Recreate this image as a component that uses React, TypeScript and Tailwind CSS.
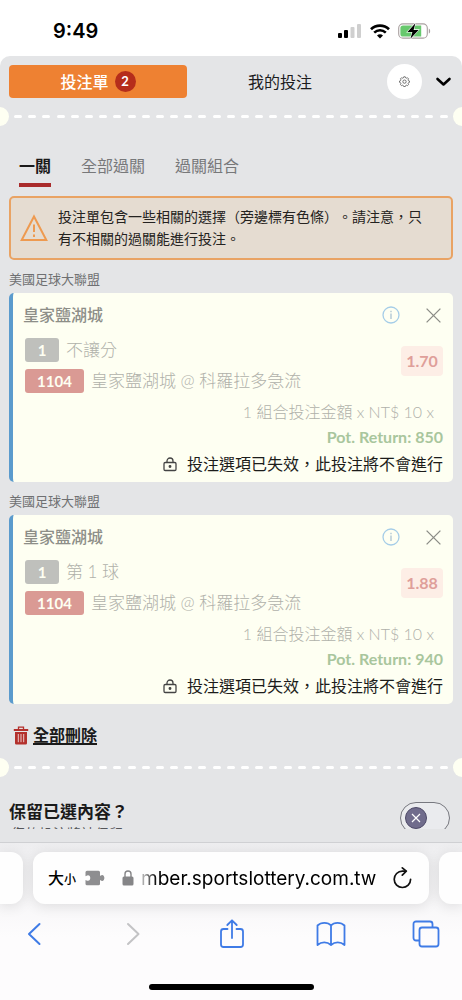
import React from "react";

type Bet = {
  id: string;
  league: string;
  pick: string;
  market: string;
  code: string;
  match: string;
  odds: string;
  payout: string;
};

const bets: Bet[] = [
  {
    id: "bet-1",
    league: "美國足球大聯盟",
    pick: "皇家鹽湖城",
    market: "不讓分",
    code: "1104",
    match: "皇家鹽湖城 @ 科羅拉多急流",
    odds: "1.70",
    payout: "850",
  },
  {
    id: "bet-2",
    league: "美國足球大聯盟",
    pick: "皇家鹽湖城",
    market: "第 1 球",
    code: "1104",
    match: "皇家鹽湖城 @ 科羅拉多急流",
    odds: "1.88",
    payout: "940",
  },
];

function StatusBar() {
  return (
    <header className="flex h-14 shrink-0 items-center justify-between bg-white pt-[6px] pr-[31px] pl-[53px]">
      <span className="font-['Inter','Noto_Sans_CJK_TC',sans-serif] text-[20px] leading-6 font-semibold text-black">9:49</span>
      <div className="flex items-center gap-2">
        <svg width="25" height="16" viewBox="0 0 25 16" aria-hidden="true">
          <rect x="1" y="10" width="4" height="5" rx="1" fill="#000" />
          <rect x="7" y="7" width="4" height="8" rx="1" fill="#000" />
          <rect x="13.5" y="4" width="4" height="11" rx="1" fill="#cfcfcf" />
          <rect x="20" y="1" width="4" height="14" rx="1" fill="#cfcfcf" />
        </svg>
        <svg width="20" height="15" viewBox="0 0 20 15" fill="none" stroke="#000" aria-hidden="true">
          <path d="M1 5.2C6 .4 14 .4 19 5.2" strokeWidth="2.7" />
          <path d="M4.2 8.6C7.6 5.4 12.4 5.4 15.8 8.6" strokeWidth="2.6" />
          <path d="M7 11.4c1.8-1.6 4.2-1.6 6 0L10 14.6z" fill="#000" stroke="none" />
        </svg>
        <svg width="33" height="16" viewBox="0 0 33 16" aria-hidden="true">
          <rect x=".7" y=".9" width="28.6" height="14.2" rx="4.2" fill="#fff" stroke="#a9a0a0" strokeWidth="1.1" />
          <path d="M5 2.4h18.2v11.2H5a2.6 2.6 0 0 1-2.6-2.6V5A2.6 2.6 0 0 1 5 2.4z" fill="#67c86d" />
          <path d="M30.8 5.4c1.8.7 1.8 4.5 0 5.2z" fill="#a9a0a0" />
          <path d="M17.4 .2 9.4 8.900h5l-2 6.900 8.200-8.900h-5z" fill="#000" stroke="#fff" strokeWidth="1.1" paintOrder="stroke" />
        </svg>
      </div>
    </header>
  );
}

function Perforation() {
  return (
    <div className="flex items-center justify-between overflow-hidden" aria-hidden="true">
      <span className="-ml-[10px] size-[19px] shrink-0 rounded-full bg-[#fefff2]" />
      <div className="mx-[5px] flex flex-1 justify-between">
        {Array.from({ length: 31 }, (_, i) => (
          <span key={i} className="h-[3px] w-2 rounded-full bg-white" />
        ))}
      </div>
      <span className="-mr-[10px] size-[19px] shrink-0 rounded-full bg-[#fefff2]" />
    </div>
  );
}

function SlipHeader() {
  return (
    <div className="flex items-center px-[9px] pt-2 pb-2">
      <button type="button" className="flex h-[33px] flex-1 items-center justify-center gap-[6px] rounded-[4px] bg-[#ee8132] text-base font-medium text-white">
        投注單
        <span className="flex size-[21px] items-center justify-center rounded-full bg-[#b52d1b] text-[13px] font-bold">2</span>
      </button>
      <button type="button" className="h-[33px] flex-1 pl-1 text-base text-[#1c1c1e]">我的投注</button>
      <button type="button" aria-label="設定" className="ml-[18px] flex size-[35px] items-center justify-center rounded-full bg-white">
        <svg width="11" height="11" viewBox="0 0 24 24" fill="none" stroke="#666" strokeWidth="2" aria-hidden="true">
          <path d="M9.500 4 10.300 1.800h3.400l.8 2.200 1.800.8 2.200-1 2.300 2.400-1 2.100.8 1.900 2.200.7v3l-2.200.8-.8 1.900 1 2.100-2.300 2.400-2.200-1-1.800.8-.8 2.200h-3.400L9.500 20.900l-1.800-.8-2.200 1-2.300-2.400 1-2.100-.8-1.900L1.200 13.900v-3l2.200-.7.8-1.900-1-2.100 2.300-2.400 2.200 1z" strokeLinejoin="round" />
          <circle cx="12" cy="12.300" r="3.600" />
        </svg>
      </button>
      <button type="button" aria-label="收合" className="ml-[13px] flex h-[33px] items-center">
        <svg width="18" height="10" viewBox="0 0 18 10" fill="none" stroke="#000" strokeWidth="2.600" strokeLinecap="round" strokeLinejoin="round" aria-hidden="true">
          <path d="M2.500 2 8.500 7.500 14.500 2" />
        </svg>
      </button>
    </div>
  );
}

function SlipTabs() {
  const tab = "border-b-4 pb-[5px] text-base leading-6";
  return (
    <nav className="mt-7 flex gap-[30px] px-[19px]">
      <button type="button" className={`${tab} border-[#a92b2b] font-bold text-[#1a1a1a]`}>一關</button>
      <button type="button" className={`${tab} border-transparent text-[#77787a]`}>全部過關</button>
      <button type="button" className={`${tab} border-transparent text-[#77787a]`}>過關組合</button>
    </nav>
  );
}

function Warning() {
  return (
    <div role="alert" className="mx-[9px] mt-[9px] flex items-center gap-[10px] rounded-[5px] border-2 border-[#e9a364] bg-[#e5dcd1] py-2 pr-5 pl-[9px]">
      <svg width="28" height="28" viewBox="0 0 28 28" fill="none" stroke="#ee9a50" strokeWidth="2" className="shrink-0" aria-hidden="true">
        <path d="M14 2.500 26.300 26H1.700z" />
        <path d="M14 10.500v7.500M14 20.500v2.500" />
      </svg>
      <p className="text-sm leading-[22px] text-[#242220] [text-spacing-trim:space-all]">
        投注單包含一些相關的選擇（旁邊標有色條）。請注意，只有不相關的過關能進行投注。
      </p>
    </div>
  );
}

function BetCard({ bet }: { bet: Bet }) {
  return (
    <section className="px-[9px]">
      <h2 className="pt-[9px] pb-1 text-[13px] leading-5 text-[#6f7072]">{bet.league}</h2>
      <article className="rounded-[5px] border-l-4 border-[#5b9bcd] bg-[#fefff2] pt-[10px] pr-[10px] pb-[6px] pl-[10px]">
        <div className="flex h-6 items-center justify-between">
          <h3 className="text-base leading-6 font-medium text-[#8d8e88]">{bet.pick}</h3>
          <div className="flex items-center gap-[26px] pr-[2px]">
            <button type="button" aria-label="詳情">
              <svg width="18" height="18" viewBox="0 0 18 18" fill="none" aria-hidden="true">
                <circle cx="9" cy="9" r="8" stroke="#a5cde8" strokeWidth="1.300" />
                <path d="M9 7.500v5.500M9 4.700v1.500" stroke="#a5bfcf" strokeWidth="1.200" />
              </svg>
            </button>
            <button type="button" aria-label="移除">
              <svg width="15" height="15" viewBox="0 0 15 15" fill="none" stroke="#8b8c86" strokeWidth="1.300" aria-hidden="true">
                <path d="m.6.6 13.800 13.800M14.400.6.6 14.400" />
              </svg>
            </button>
          </div>
        </div>
        <div className="mt-[11px] flex items-start justify-between">
          <div className="flex flex-col gap-[7px] pl-[2px] text-[17px] leading-6 font-light text-[#b0b1aa]">
            <div className="flex items-center gap-[7px]">
              <span className="w-[34px] rounded-[3px] bg-[#bfc0bc] text-center text-[15px] leading-6 font-bold text-[#fefff2]">1</span>
              <span>{bet.market}</span>
            </div>
            <div className="flex items-center gap-[7px]">
              <span className="w-[59px] rounded-[3px] bg-[#da9a94] text-center text-[15px] leading-6 font-bold text-[#fefff2]">{bet.code}</span>
              <span>{bet.match}</span>
            </div>
          </div>
          <span className="mt-2 w-[42px] rounded-[4px] bg-[#fdeee6] text-center text-base leading-[30px] font-bold text-[#df9f9a]">{bet.odds}</span>
        </div>
        <div className="mt-[6px] text-right">
          <p className="pr-[9px] text-base leading-[26px] font-light text-[#b0b1aa]">1 組合投注金額 x NT$ 10 x</p>
          <p className="text-base leading-6 font-bold text-[#a9c69d]">Pot. Return: {bet.payout}</p>
        </div>
        <p className="mt-[3px] flex items-center justify-end gap-[10px] text-base leading-6 text-[#1c1c1a]">
          <svg width="14" height="15" viewBox="0 0 14 15" fill="none" stroke="#444" strokeWidth="1.300" aria-hidden="true">
            <rect x="1" y="5.500" width="12" height="8" rx="1.200" />
            <path d="M4 5.500V4a3 3 0 0 1 6 0v1.500" />
            <circle cx="7" cy="9.500" r=".8" fill="#333" />
          </svg>
          投注選項已失效，此投注將不會進行
        </p>
      </article>
    </section>
  );
}

function KeepSelection() {
  return (
    <div className="mt-[22px] flex items-start justify-between pr-3 pl-[9px]">
      <div>
        <label htmlFor="keep" className="block text-[17px] leading-[26px] font-bold text-[#1a1a1a]">保留已選內容？</label>
        <p className="pl-[2px] text-sm leading-[18px] text-[#55565a]">您的投注將被保留</p>
      </div>
      <label className="relative mt-[3px] block">
        <input id="keep" type="checkbox" className="peer sr-only" />
        <span className="flex h-[32px] w-[50px] items-center rounded-full border border-[#77787f] bg-[#eaebee] pl-[4px] peer-checked:bg-[#c8d8c0]">
          <span className="flex size-[22px] items-center justify-center rounded-full border border-[#4e4a68] bg-[#706c8c]">
            <svg width="10" height="10" viewBox="0 0 10 10" stroke="#fff" strokeWidth="1.200" aria-hidden="true">
              <path d="m1 1 8 8M9 1 1 9" />
            </svg>
          </span>
        </span>
      </label>
    </div>
  );
}

function BrowserBar() {
  return (
    <footer className="shrink-0 overflow-hidden border-t border-[#cfd0d3] bg-linear-to-b from-[#eeeef0] to-[#fdfcfd] to-60% pt-[9px]">
      <div className="flex h-[52px] gap-[10px]">
        <div className="w-[23px] rounded-r-[12px] bg-[#fefefe] shadow-[0_2px_14px_rgba(0,0,0,0.11)]" />
        <div className="flex min-w-0 flex-1 items-center rounded-[12px] bg-[#fefefe] pr-[17px] pl-[15px] shadow-[0_2px_14px_rgba(0,0,0,0.11)]">
          <button type="button" className="flex shrink-0 items-baseline text-base leading-6 font-medium text-black">
            大<span className="text-xs">小</span>
          </button>
          <svg width="20" height="16" viewBox="0 0 20 16" fill="#8e8e90" className="ml-[9px] shrink-0" aria-hidden="true">
            <path d="M2 .8h11.500a1.500 1.500 0 0 1 1.500 1.500v3.500c.8 0 1-.9 2.100-.9 3 0 3 6 0 6-1.100 0-1.300-.9-2.100-.9v3.700a1.500 1.500 0 0 1-1.500 1.500H2A1.500 1.500 0 0 1 .5 13.700v-3.800c.9 0 1.200.9 2.500.9 3 0 3-5.500 0-5.500-1.300 0-1.600.9-2.500.9V2.300A1.500 1.500 0 0 1 2 .8z" />
          </svg>
          <svg width="12" height="16" viewBox="0 0 12 16" className="ml-[17px] shrink-0" aria-hidden="true">
            <rect x=".5" y="6.500" width="11" height="9" rx="1.500" fill="#858587" />
            <path d="M3 7V4a3 3 0 0 1 6 0v3" fill="none" stroke="#858587" strokeWidth="1.400" />
          </svg>
          <input
            type="text"
            readOnly
            aria-label="網址"
            value="mber.sportslottery.com.tw"
            className="ml-[7px] h-8 min-w-0 flex-1 bg-transparent font-['Inter','Noto_Sans_CJK_TC',sans-serif] text-[19px] text-black outline-none mask-[linear-gradient(to_right,rgba(0,0,0,0.2),#000_16px)]"
          />
          <button type="button" aria-label="重新載入" className="ml-3 shrink-0">
            <svg width="19" height="23" viewBox="0 0 19 23" fill="none" stroke="#111" strokeWidth="1.700" strokeLinecap="round" strokeLinejoin="round" aria-hidden="true">
              <path d="M17.600 12.300a8.200 8.200 0 1 1-8.200-8.200h3.200" />
              <path d="m9.300 .9 4 3.300-4 4" />
            </svg>
          </button>
        </div>
        <div className="w-[23px] rounded-l-[12px] bg-[#fefefe] shadow-[0_2px_14px_rgba(0,0,0,0.11)]" />
      </div>
      <div className="flex h-[60px] items-center justify-between pr-[22px] pl-[26px] text-[#3f7be6]">
        <button type="button" aria-label="上一頁">
          <svg width="16" height="24" viewBox="0 0 16 24" fill="none" stroke="currentColor" strokeWidth="2" strokeLinecap="round" strokeLinejoin="round" aria-hidden="true">
            <path d="M13.500 2 3 12l10.500 10" />
          </svg>
        </button>
        <button type="button" aria-label="下一頁" disabled className="ml-4 text-[#c3c3c5]">
          <svg width="16" height="24" viewBox="0 0 16 24" fill="none" stroke="currentColor" strokeWidth="2" strokeLinecap="round" strokeLinejoin="round" aria-hidden="true">
            <path d="m3 2 10.500 10L3 22" />
          </svg>
        </button>
        <button type="button" aria-label="分享" className="ml-3">
          <svg width="26" height="30" viewBox="0 0 26 30" fill="none" stroke="currentColor" strokeWidth="1.800" strokeLinecap="round" strokeLinejoin="round" aria-hidden="true">
            <path d="M8.500 10H4.500a2.500 2.500 0 0 0-2.500 2.500v13A2.500 2.500 0 0 0 4.500 28h17a2.500 2.500 0 0 0 2.500-2.500v-13a2.500 2.500 0 0 0-2.500-2.500h-4" />
            <path d="M13 19V1.500M8.300 6 13 1.300 17.700 6" />
          </svg>
        </button>
        <button type="button" aria-label="書籤" className="ml-1">
          <svg width="30" height="26" viewBox="0 0 30 26" fill="none" stroke="currentColor" strokeWidth="1.800" strokeLinejoin="round" aria-hidden="true">
            <path d="M15 4.500C12 1 5 1 1.500 4.500V24c4-3.500 9.500-3.500 13.500 0 4-3.500 9.500-3.500 13.500 0V4.500C25 1 18 1 15 4.500zM15 4.500V24" />
          </svg>
        </button>
        <button type="button" aria-label="分頁">
          <svg width="28" height="28" viewBox="0 0 28 28" fill="none" stroke="currentColor" strokeWidth="1.800" strokeLinejoin="round" aria-hidden="true">
            <path d="M7.500 20.500H4A2.500 2.500 0 0 1 1.500 18V4A2.500 2.500 0 0 1 4 1.500h14A2.500 2.500 0 0 1 20.500 4v3.500" />
            <rect x="7.500" y="7.500" width="19" height="19" rx="2.500" />
          </svg>
        </button>
      </div>
      <div className="mx-auto mt-5 mb-[10px] h-[6px] w-[165px] rounded-full bg-black" />
    </footer>
  );
}

export default function App() {
  return (
    <div lang="zh-TW" className="flex h-screen flex-col overflow-hidden bg-white font-['Lato','Noto_Sans_CJK_TC',sans-serif]">
      <StatusBar />
      <main className="flex min-h-0 flex-1 flex-col rounded-t-[10px] bg-[#e4e5e7] pb-[13px]">
        <SlipHeader />
        <div className="min-h-0 flex-1 overflow-y-auto [scrollbar-width:none]">
          <Perforation />
          <SlipTabs />
          <Warning />
          {bets.map((bet) => (
            <BetCard key={bet.id} bet={bet} />
          ))}
          <button type="button" className="mt-[18px] mb-[10px] ml-[13px] flex items-center gap-1 text-base leading-[26px] font-bold text-[#1a1a1a]">
            <svg width="16" height="19" viewBox="0 0 16 19" fill="none" aria-hidden="true">
              <path d="M5.500 3V1.200h5V3" stroke="#b3302c" strokeWidth="1.300" />
              <path d="M.8 4h14.400" stroke="#b3302c" strokeWidth="2" />
              <path d="M2 6h12v11.200a1.300 1.300 0 0 1-1.300 1.300H3.300A1.300 1.300 0 0 1 2 17.200z" fill="#b3302c" />
              <path d="M5.300 8v8.200M8 8v8.200M10.700 8v8.200" stroke="#e9c9c9" strokeWidth="1" />
            </svg>
            <span className="underline decoration-2 underline-offset-2">全部刪除</span>
          </button>
          <Perforation />
          <KeepSelection />
        </div>
      </main>
      <BrowserBar />
    </div>
  );
}
